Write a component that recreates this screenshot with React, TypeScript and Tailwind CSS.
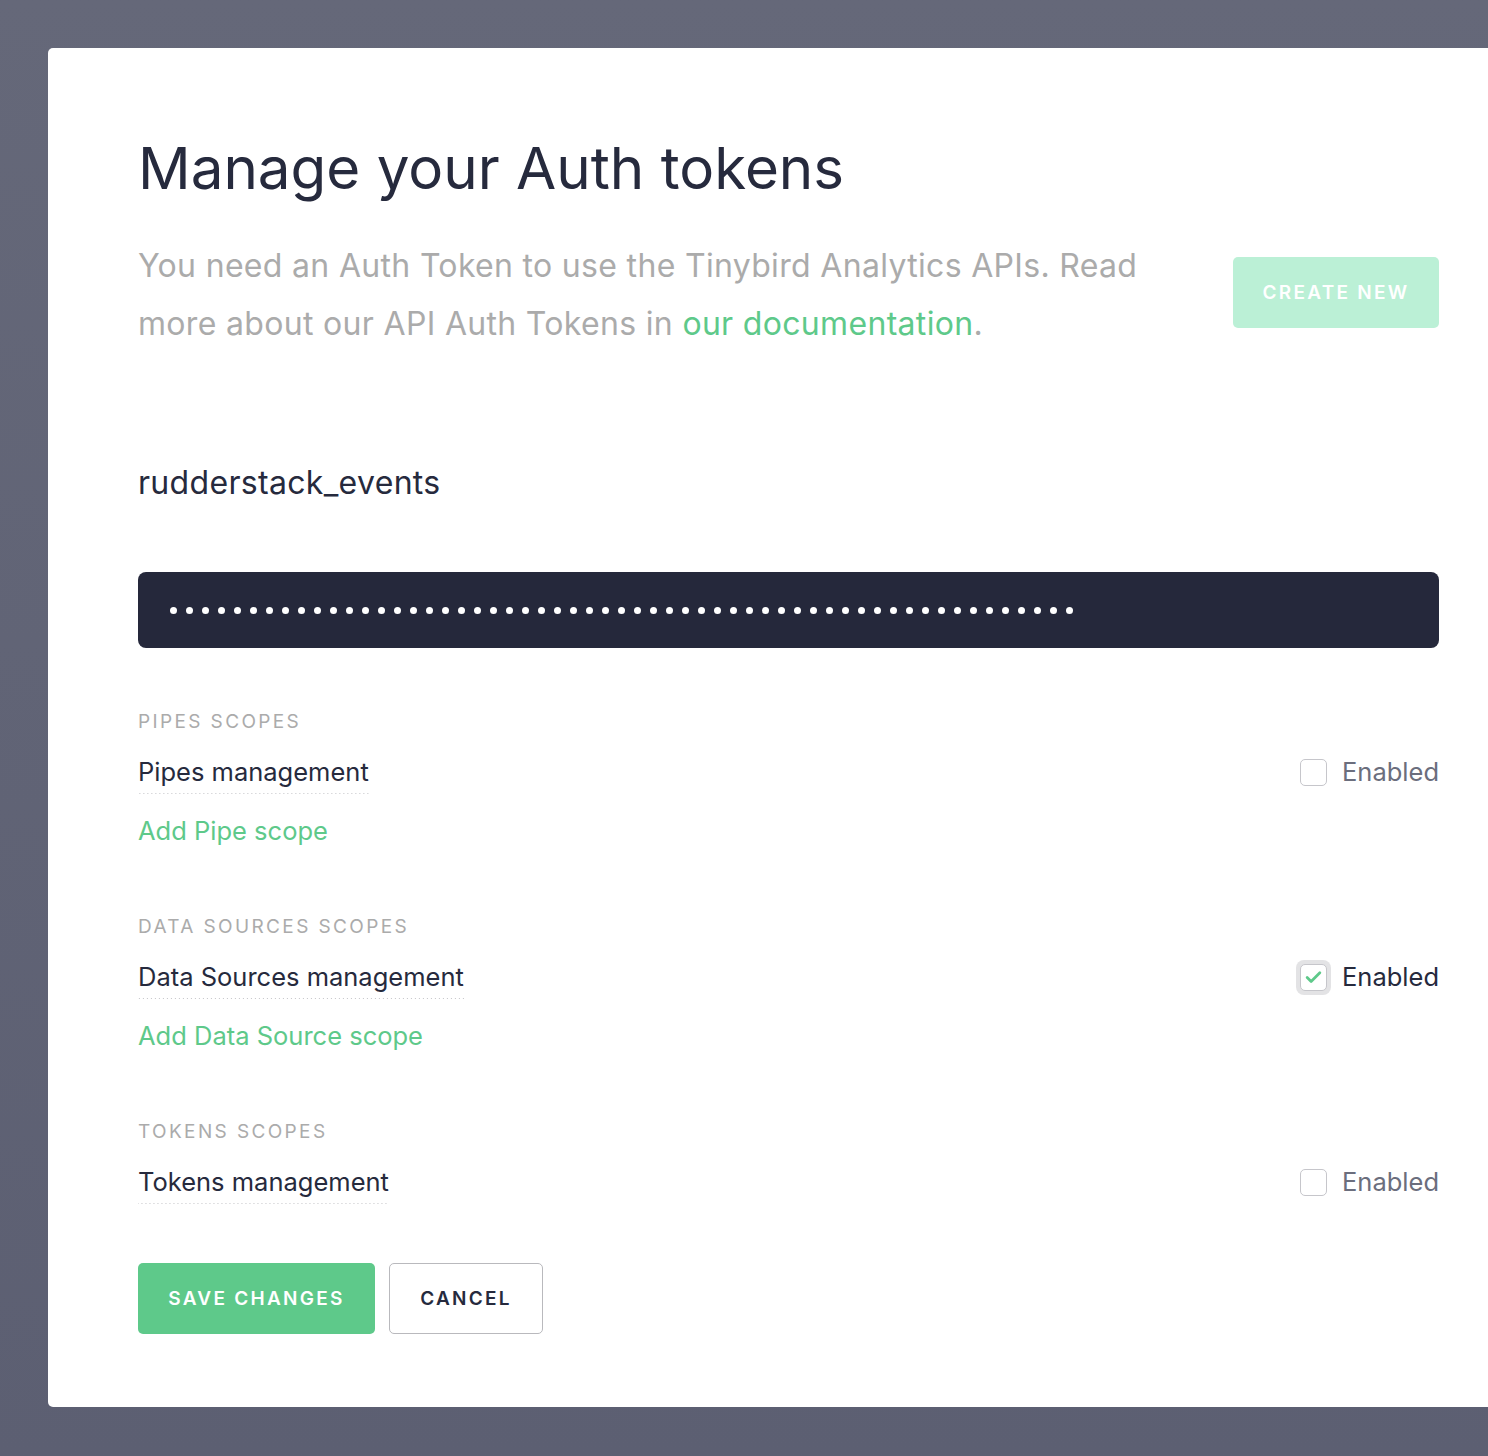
import { Check } from "lucide-react";

const FONT = { fontFamily: "Inter, 'Noto Sans', sans-serif" };

const DOTS = Array.from({ length: 57 }, (_, i) => i);

type ScopeProps = {
  label: string;
  name: string;
  addText?: string;
  checked?: boolean;
};

function Scope({ label, name, addText, checked }: ScopeProps) {
  return (
    <div>
      <p className="text-[19px] leading-[24px] tracking-[0.125em] text-[#ababab] uppercase">{label}</p>
      <div className="flex items-center justify-between mt-[21px]">
        <span className="text-[25.5px] leading-[34px] text-[#262a3d] pb-[5px] bg-[linear-gradient(to_right,#c4c4c8_1px,transparent_1px)] bg-[length:4px_1px] bg-repeat-x bg-bottom">
          {name}
        </span>
        <label className="flex items-center gap-[15px] pb-[5px]">
          {checked ? (
            <span className="w-[35px] h-[35px] -m-[4px] rounded-[8px] bg-[#e3e3e5] flex items-center justify-center">
              <span className="w-[27px] h-[27px] rounded-[5px] border border-[#c6c6cb] bg-white flex items-center justify-center">
                <Check className="w-[19px] h-[19px] text-[#5ec98a]" strokeWidth={3.5} />
              </span>
            </span>
          ) : (
            <span className="w-[27px] h-[27px] rounded-[5px] border border-[#c6c6cb] bg-white" />
          )}
          <span className={`text-[25.5px] leading-[34px] ${checked ? "text-[#262a3d]" : "text-[#6b6e7d]"}`}>
            Enabled
          </span>
        </label>
      </div>
      {addText && (
        <a className="block mt-[20px] text-[25.5px] leading-[34px] text-[#5ec98a]">{addText}</a>
      )}
    </div>
  );
}

export default function App() {
  return (
    <div
      className="h-[1456px] w-full overflow-hidden bg-gradient-to-b from-[#656879] to-[#5c5f72] pt-[48px] pl-[48px]"
      style={FONT}
    >
      <div className="w-[1481px] h-[1359px] bg-white rounded-[5px] px-[90px] pt-[80px]">
        <h1 className="text-[58.3px] leading-[80px] text-[#262a3d]">Manage your Auth tokens</h1>

        <div className="flex justify-between items-start mt-[29px]">
          <p className="w-[1040px] text-[32px] leading-[58px] tracking-[0.01em] text-[#ababab]">
            You need an Auth Token to use the Tinybird Analytics APIs. Read
            <br />
            more about our API Auth Tokens in <a className="text-[#5ec98a]">our documentation</a>.
          </p>
          <button className="mt-[20px] w-[206px] h-[71px] pt-[2px] rounded-[5px] bg-[#bbf0d6] text-white text-[19px] font-semibold tracking-[0.12em]">
            CREATE NEW
          </button>
        </div>

        <p className="mt-[110px] text-[32px] leading-[40px] tracking-[0.01em] text-[#262a3d]">rudderstack_events</p>

        <div className="mt-[69px] h-[76px] rounded-[8px] bg-[#25283b] flex items-center gap-[9px] pl-[32px]">
          {DOTS.map((d) => (
            <span key={d} className="w-[7px] h-[7px] rounded-full bg-white" />
          ))}
        </div>

        <div className="mt-[62px] flex flex-col gap-[67px]">
          <Scope label="Pipes scopes" name="Pipes management" addText="Add Pipe scope" />
          <Scope label="Data sources scopes" name="Data Sources management" addText="Add Data Source scope" checked />
          <Scope label="Tokens scopes" name="Tokens management" />
        </div>

        <div className="flex gap-[14px] mt-[59px]">
          <button className="w-[237px] h-[71px] pt-[2px] rounded-[5px] bg-[#5ec98a] text-white text-[19px] font-semibold tracking-[0.12em]">
            SAVE CHANGES
          </button>
          <button className="w-[154px] h-[71px] pt-[2px] rounded-[5px] border border-[#b9b9bd] bg-white text-[#262a3d] text-[19px] font-semibold tracking-[0.12em]">
            CANCEL
          </button>
        </div>
      </div>
    </div>
  );
}
